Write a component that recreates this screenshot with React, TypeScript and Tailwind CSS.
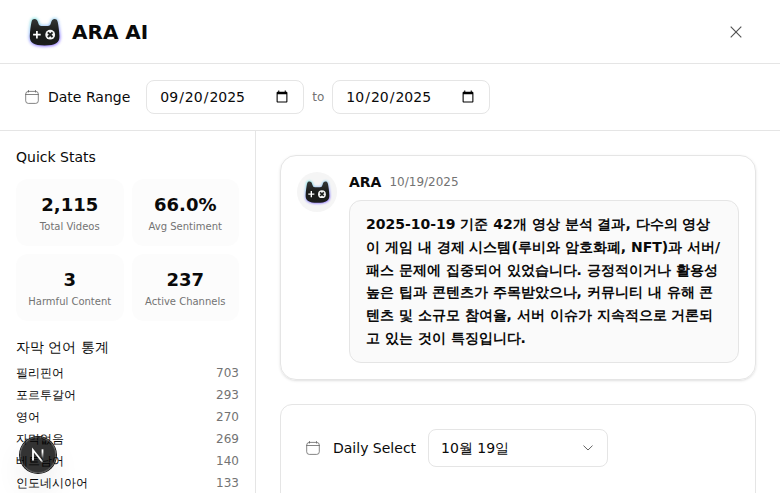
import { useState } from "react";

const stats = [
  { value: "2,115", label: "Total Videos" },
  { value: "66.0%", label: "Avg Sentiment" },
  { value: "3", label: "Harmful Content" },
  { value: "237", label: "Active Channels" },
];

const languages = [
  { name: "필리핀어", count: 703 },
  { name: "포르투갈어", count: 293 },
  { name: "영어", count: 270 },
  { name: "자막없음", count: 269 },
  { name: "베트남어", count: 140 },
  { name: "인도네시아어", count: 133 },
];

const headShape =
  "M7.500 10C8 7.600 9.200 7 10.500 7C12.500 7 13.600 8.400 14.200 10.800Q14.900 14 17.400 14H23.800Q26.300 14 27 10.800C27.600 8.400 28.700 7 30.700 7C32 7 33.200 7.600 33.700 10C34.500 14 35.200 18.500 35.400 24C35.600 31 31.500 33.400 20.600 33.400S5.600 31 5.800 24C6 18.500 6.700 14 7.500 10Z";

function AraLogo({ className }: { className: string }) {
  return (
    <svg viewBox="0 0 40 40" className={className} aria-label="ARA">
      <defs>
        <linearGradient id="glow" x1="0" y1="0" x2="0.4" y2="1">
          <stop offset="0" stopColor="#5edfd4" />
          <stop offset="0.5" stopColor="#93b4fc" />
          <stop offset="1" stopColor="#7454ff" />
        </linearGradient>
        <linearGradient id="body" x1="0" y1="0" x2="0" y2="1">
          <stop offset="0" stopColor="#343736" />
          <stop offset="0.5" stopColor="#191b1a" />
          <stop offset="1" stopColor="#1c1d1c" />
        </linearGradient>
        <filter id="soft" x="-30%" y="-30%" width="160%" height="160%">
          <feGaussianBlur stdDeviation="1.5" />
        </filter>
      </defs>
      <path d={headShape} fill="url(#glow)" stroke="url(#glow)" strokeWidth="2" opacity="0.8" filter="url(#soft)" />
      <path d={headShape} fill="url(#body)" />
      <path d="M12.900 18.900v7.600M9.100 22.700h7.600" stroke="#fff" strokeWidth="1.700" />
      <circle cx="26.200" cy="22.700" r="4.900" fill="#f5f5f5" />
      <path d="M23.900 20.400l4.600 4.600M28.500 20.400l-4.600 4.600" stroke="#1c1e1d" strokeWidth="2" />
    </svg>
  );
}

function CalendarIcon() {
  return (
    <svg viewBox="0 0 16 16" className="size-4 shrink-0 text-[#666666]" fill="none" stroke="currentColor" strokeWidth="0.8" strokeLinecap="round">
      <rect x="1.700" y="2.400" width="12.600" height="12" rx="2.600" />
      <path d="M1.700 5.500h12.600M4.500 1.500v1.600M11.500 1.500v1.600" />
    </svg>
  );
}

function DateField({ initial }: { initial: string }) {
  const [value, setValue] = useState(initial);
  return (
    <input
      type="date"
      value={value}
      onChange={(e) => setValue(e.target.value)}
      className="h-[34px] w-[158px] rounded-lg border border-[#e5e5e5] bg-white px-3 text-sm"
    />
  );
}

export default function App() {
  return (
    <div className="relative flex h-[493px] w-full flex-col overflow-hidden bg-white font-['DejaVu_Sans',sans-serif] text-[#0a0a0a]">
      <header className="flex h-16 shrink-0 items-center justify-between border-b border-[#e5e5e5] px-6">
        <div className="flex items-center gap-2">
          <AraLogo className="size-10" />
          <h1 className="text-xl font-bold">ARA AI</h1>
        </div>
        <button className="flex size-10 items-center justify-center" aria-label="Close">
          <svg viewBox="0 0 16 16" className="size-4 text-[#525252]" fill="none" stroke="currentColor" strokeWidth="1.150">
            <path d="M2.700 2.700l10.600 10.600M13.300 2.700l-10.600 10.600" />
          </svg>
        </button>
      </header>

      <div className="flex h-[67px] shrink-0 items-center border-b border-[#e5e5e5] px-6">
        <div className="mr-4 flex items-center gap-2">
          <CalendarIcon />
          <span className="text-sm">Date Range</span>
        </div>
        <div className="flex items-center gap-2">
          <DateField initial="2025-09-20" />
          <span className="text-xs text-[#737373]">to</span>
          <DateField initial="2025-10-20" />
        </div>
      </div>

      <div className="flex min-h-0 flex-1">
        <aside className="w-64 shrink-0 overflow-hidden border-r border-[#e5e5e5] p-4">
          <h2 className="text-sm">Quick Stats</h2>
          <div className="mt-3 grid grid-cols-2 gap-2">
            {stats.map((s) => (
              <div key={s.label} className="rounded-xl bg-[#fcfcfc] py-3 text-center">
                <div className="text-lg font-bold">{s.value}</div>
                <div className="text-[10px] leading-[15px] whitespace-nowrap text-[#737373]">{s.label}</div>
              </div>
            ))}
          </div>
          <h2 className="mt-4 text-sm">자막 언어 통계</h2>
          <ul className="mt-2 space-y-1.5">
            {languages.map((l) => (
              <li key={l.name} className="flex h-4 items-center justify-between text-xs">
                <span>{l.name}</span>
                <span className="text-[#737373]">{l.count}</span>
              </li>
            ))}
          </ul>
        </aside>

        <main className="flex-1 overflow-hidden p-6">
          <section className="flex h-[225px] gap-3 rounded-2xl border border-[#e5e5e5] p-4 shadow-sm">
            <div className="flex size-10 shrink-0 items-center justify-center rounded-full bg-[#f5f5f5]">
              <AraLogo className="size-8" />
            </div>
            <div className="w-[390px]">
              <div className="flex h-5 items-center gap-2">
                <span className="text-sm font-bold">ARA</span>
                <span className="text-xs text-[#737373]">10/19/2025</span>
              </div>
              <div className="mt-2 rounded-xl border border-[#e5e5e5] bg-[#fafafa] px-4 py-3 text-sm leading-[22.75px] font-semibold">
                2025-10-19 기준 42개 영상 분석 결과, 다수의 영상이 게임 내 경제 시스템(루비와 암호화폐, NFT)과 서버/패스 문제에 집중되어 있었습니다. 긍정적이거나 활용성 높은 팁과 콘텐츠가 주목받았으나, 커뮤니티 내 유해 콘텐츠 및 소규모 참여율, 서버 이슈가 지속적으로 거론되고 있는 것이 특징입니다.
              </div>
            </div>
          </section>

          <section className="mt-6 h-[300px] rounded-xl border border-[#e5e5e5] p-6">
            <div className="flex items-center gap-3">
              <CalendarIcon />
              <span className="text-sm">Daily Select</span>
              <button className="flex h-[38px] w-[180px] items-center justify-between rounded-lg border border-[#e5e5e5] px-3 text-sm">
                <span>10월 19일</span>
                <svg viewBox="0 0 16 16" className="size-4 text-[#525252]" fill="none" stroke="currentColor" strokeWidth="0.9">
                  <path d="M4.500 5.600l4.500 4.400 4.500-4.400" />
                </svg>
              </button>
            </div>
          </section>
        </main>
      </div>

      <div className="absolute bottom-5 left-5 flex size-9 items-center justify-center rounded-full bg-black/80 shadow-[0_0_0_1px_#171717,inset_0_0_0_1px_rgba(255,255,255,0.14),0_16px_32px_-8px_rgba(0,0,0,0.24)]">
        <svg viewBox="0 0 36 36" className="size-9" fill="none">
          <defs>
            <linearGradient id="nDiag" x1="16" y1="17" x2="24" y2="27" gradientUnits="userSpaceOnUse">
              <stop offset="0.6" stopColor="#fff" />
              <stop offset="1" stopColor="#fff" stopOpacity="0" />
            </linearGradient>
            <linearGradient id="nStem" x1="0" y1="12" x2="0" y2="22" gradientUnits="userSpaceOnUse">
              <stop offset="0.300" stopColor="#fff" />
              <stop offset="1" stopColor="#fff" stopOpacity="0" />
            </linearGradient>
          </defs>
          <path d="M13 23.500V13l9.500 12" stroke="url(#nDiag)" strokeWidth="1.800" />
          <path d="M22.500 12.300v10" stroke="url(#nStem)" strokeWidth="1.800" />
        </svg>
      </div>
    </div>
  );
}
